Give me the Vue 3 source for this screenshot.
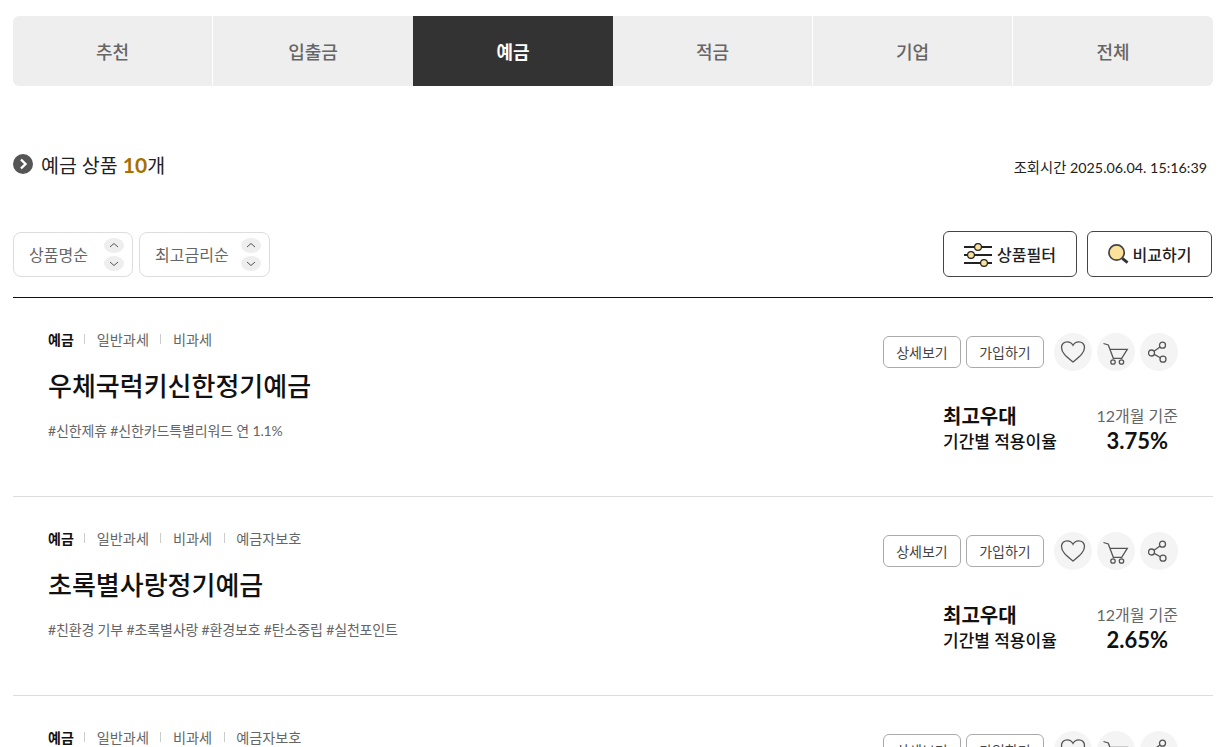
<script setup>
const tabs = ["추천", "입출금", "예금", "적금", "기업", "전체"];

const products = [
  {
    name: "우체국럭키신한정기예금",
    tags: ["일반과세", "비과세"],
    desc: "#신한제휴 #신한카드특별리워드 연 1.1%",
    rate: "3.75%",
  },
  {
    name: "초록별사랑정기예금",
    tags: ["일반과세", "비과세", "예금자보호"],
    desc: "#친환경 기부 #초록별사랑 #환경보호 #탄소중립 #실천포인트",
    rate: "2.65%",
  },
  {
    name: "이웃사랑정기예금",
    tags: ["일반과세", "비과세", "예금자보호"],
    desc: "#이웃사랑 #사회공헌",
    rate: "2.50%",
  },
];

const sorts = ["상품명순", "최고금리순"];
</script>

<template>
  <div class="page">
    <ul class="tabs">
      <li v-for="tab in tabs" :key="tab" class="tab" :class="{ active: tab === '예금' }">{{ tab }}</li>
    </ul>

    <div class="summary">
      <h2 class="count">
        <svg class="bullet" viewBox="0 0 20 20">
          <circle cx="10" cy="10" r="10" fill="#555" />
          <path d="M8 5.500L12.500 10L8 14.500" fill="none" stroke="#fff" stroke-width="2.400" />
        </svg>
        <span>예금 상품 <b>10</b>개</span>
      </h2>
      <p class="time">조회시간 2025.06.04. 15:16:39</p>
    </div>

    <div class="toolbar">
      <div class="sorts">
        <div v-for="sort in sorts" :key="sort" class="sort">
          <span class="sort-label">{{ sort }}</span>
          <div class="arrows">
            <button class="arrow">
              <svg viewBox="0 0 20 15"><path d="M6 9L10 5.500L14 9" /></svg>
            </button>
            <button class="arrow">
              <svg viewBox="0 0 20 15"><path d="M6 6L10 9.500L14 6" /></svg>
            </button>
          </div>
        </div>
      </div>
      <div class="tools">
        <button class="tool filter">
          <svg class="filter-icon" viewBox="0 0 28 24">
            <path d="M0 4H28M0 12H28M0 20H28" stroke="#222" stroke-width="2.200" />
            <circle cx="14" cy="4" r="3.400" fill="#fbe29a" stroke="#222" stroke-width="1.200" />
            <circle cx="7" cy="12" r="3.400" fill="#fbe29a" stroke="#222" stroke-width="1.200" />
            <circle cx="20" cy="20" r="3.400" fill="#fbe29a" stroke="#222" stroke-width="1.200" />
          </svg>
          상품필터
        </button>
        <button class="tool compare">
          <svg class="search-icon" viewBox="0 0 22 22">
            <circle cx="9" cy="9" r="8" fill="#fbe29a" stroke="#444" stroke-width="1.800" />
            <path d="M15 15L20.500 19.500" stroke="#333" stroke-width="3" />
          </svg>
          비교하기
        </button>
      </div>
    </div>

    <ul class="list">
      <li v-for="product in products" :key="product.name" class="item">
        <div class="left">
          <div class="tags">
            <span class="tag strong">예금</span>
            <span v-for="tag in product.tags" :key="tag" class="tag">{{ tag }}</span>
          </div>
          <h3 class="name">{{ product.name }}</h3>
          <p class="desc">{{ product.desc }}</p>
        </div>
        <div class="right">
          <div class="actions">
            <button class="small">상세보기</button>
            <button class="small">가입하기</button>
            <button class="round first">
              <svg viewBox="0 0 26 24" width="26" height="24">
                <path d="M13 22C7 17 1.500 13 1.500 7.500C1.500 4 4.200 1.800 7.200 1.800C9.500 1.800 11.800 3 13 5.300C14.200 3 16.500 1.800 18.800 1.800C21.800 1.800 24.500 4 24.500 7.500C24.500 13 19 17 13 22Z" />
              </svg>
            </button>
            <button class="round">
              <svg viewBox="0 0 26 26" width="26" height="26">
                <path d="M0.500 4.500L5.300 6L10.300 19.300H18.700L24.300 10.300H6.700" />
                <circle cx="10" cy="23" r="2.200" />
                <circle cx="18.500" cy="23" r="2.200" />
              </svg>
            </button>
            <button class="round">
              <svg viewBox="0 0 22 22" width="22" height="22">
                <circle cx="14.500" cy="4.200" r="3" />
                <circle cx="3.500" cy="12" r="3" />
                <circle cx="15" cy="18.200" r="3" />
                <path d="M6 10.300L12 5.900M6.200 13.400L12.300 16.800" />
              </svg>
            </button>
          </div>
          <div class="rates">
            <div class="rate-label">
              <strong>최고우대</strong>
              <span>기간별 적용이율</span>
            </div>
            <div class="rate-value">
              <span>12개월 기준</span>
              <strong>{{ product.rate }}</strong>
            </div>
          </div>
        </div>
      </li>
    </ul>
  </div>
</template>

<style>
html,
body {
  height: 747px;
  overflow: hidden;
  background: #fff;
}
</style>

<style scoped>
* {
  box-sizing: border-box;
}

.page {
  width: 1200px;
  margin-left: 13px;
  padding-top: 16px;
  font-family: Lato, "Noto Sans CJK KR", sans-serif;
  color: #111;
}

ul {
  list-style: none;
  margin: 0;
  padding: 0;
}

button {
  font-family: inherit;
  background: #fff;
  cursor: pointer;
  padding: 0;
}

.tabs {
  display: flex;
  height: 70px;
  border-radius: 6px;
  overflow: hidden;
  background: #eee;
}

.tab {
  width: 200px;
  display: flex;
  align-items: center;
  justify-content: center;
  font-size: 18px;
  font-weight: 500;
  color: #666;
  border-right: 1px solid #fff;
}

.tab:last-child,
.tab:has(+ .active) {
  border-right: none;
}

.tab.active {
  background: #333;
  color: #fff;
  font-weight: 700;
  border-right: none;
}

.summary {
  display: flex;
  justify-content: space-between;
  padding: 64px 6px 0 0;
  height: 146px;
}

.count {
  display: flex;
  align-items: center;
  gap: 8px;
  height: 28px;
  margin: 0;
  font-size: 19.500px;
  font-weight: 400;
  color: #222;
}

.count b {
  color: #a86f00;
  font-weight: 700;
  font-size: 21px;
}

.bullet {
  width: 20px;
  height: 20px;
}

.time {
  margin: 9px 0 0;
  font-size: 14.300px;
  line-height: 18px;
  color: #222;
}

.toolbar {
  display: flex;
  justify-content: space-between;
  align-items: flex-start;
  height: 66px;
  padding-right: 1px;
  border-bottom: 1px solid #111;
}

.sorts,
.tools {
  display: flex;
}

.sorts {
  gap: 6px;
}

.sort {
  display: flex;
  align-items: center;
  justify-content: space-between;
  height: 45px;
  padding: 0 8px 0 15px;
  border: 1px solid #ddd;
  border-radius: 8px;
  font-size: 16px;
  color: #666;
}

.sort:first-child {
  width: 120px;
}

.sort:last-child {
  width: 131px;
}

.sort-label {
  margin-top: -2px;
}

.arrows {
  display: flex;
  flex-direction: column;
  gap: 3px;
}

.arrow {
  width: 20px;
  height: 15px;
  border: none;
  border-radius: 50%;
  background: #eee;
  display: block;
}

.arrow svg {
  display: block;
  width: 20px;
  height: 15px;
}

.arrow path {
  fill: none;
  stroke: #555;
  stroke-width: 1;
}

.tools {
  gap: 10px;
  margin-top: -1px;
}

.tool {
  height: 46px;
  border: 1px solid #444;
  border-radius: 6px;
  display: flex;
  align-items: center;
  justify-content: center;
  font-size: 16px;
  font-weight: 500;
  color: #222;
}

.filter {
  width: 134px;
  gap: 5px;
}

.compare {
  width: 125px;
  gap: 4px;
}

.filter-icon {
  width: 28px;
  height: 24px;
  margin-top: 1px;
}

.search-icon {
  width: 21px;
  height: 21px;
}

.item {
  display: flex;
  justify-content: space-between;
  height: 199px;
  padding: 0 35px;
  border-bottom: 1px solid #ddd;
}

.left {
  padding-top: 31px;
}

.tags {
  display: flex;
  align-items: center;
  height: 20px;
}

.tag {
  font-size: 14.200px;
  color: #666;
  display: flex;
  align-items: center;
}

.tag.strong {
  font-size: 14px;
  color: #111;
  font-weight: 700;
  margin-right: -1px;
}

.tag + .tag::before {
  content: "";
  width: 1px;
  height: 10px;
  background: #ccc;
  margin: 0 11.500px;
}

.name {
  margin: 19px 0 0;
  font-size: 26px;
  line-height: 36px;
  font-weight: 500;
  color: #111;
}

.desc {
  margin: 17px 0 0;
  font-size: 14px;
  line-height: 20px;
  letter-spacing: -0.150px;
  color: #666;
}

.right {
  width: 295px;
  padding-top: 35px;
}

.actions {
  display: flex;
  align-items: center;
  height: 38px;
}

.small {
  width: 78px;
  height: 32px;
  margin-right: 5px;
  border: 1px solid #aaa;
  border-radius: 6px;
  font-size: 14px;
  color: #444;
}

.round {
  width: 38px;
  height: 38px;
  margin-right: 5px;
  border: none;
  border-radius: 50%;
  background: #f4f4f4;
  display: flex;
  align-items: center;
  justify-content: center;
}

.round:last-child {
  margin-right: 0;
}

.round.first {
  margin-left: 5px;
}

.round svg {
  fill: none;
  stroke: #555;
  stroke-width: 1.300;
}

.rates {
  display: flex;
  justify-content: space-between;
  margin-top: 32px;
  padding-left: 60px;
}

.rate-label,
.rate-value {
  display: flex;
  flex-direction: column;
}

.rate-label {
  padding-top: 1px;
}

.rate-label strong {
  font-size: 20px;
  line-height: 25px;
  font-weight: 700;
}

.rate-label span {
  font-size: 17px;
  line-height: 25px;
  font-weight: 500;
}

.rate-value {
  align-items: center;
}

.rate-value span {
  font-size: 16px;
  line-height: 25px;
  color: #666;
}

.rate-value strong {
  font-size: 22px;
  line-height: 25px;
  font-weight: 700;
}
</style>
